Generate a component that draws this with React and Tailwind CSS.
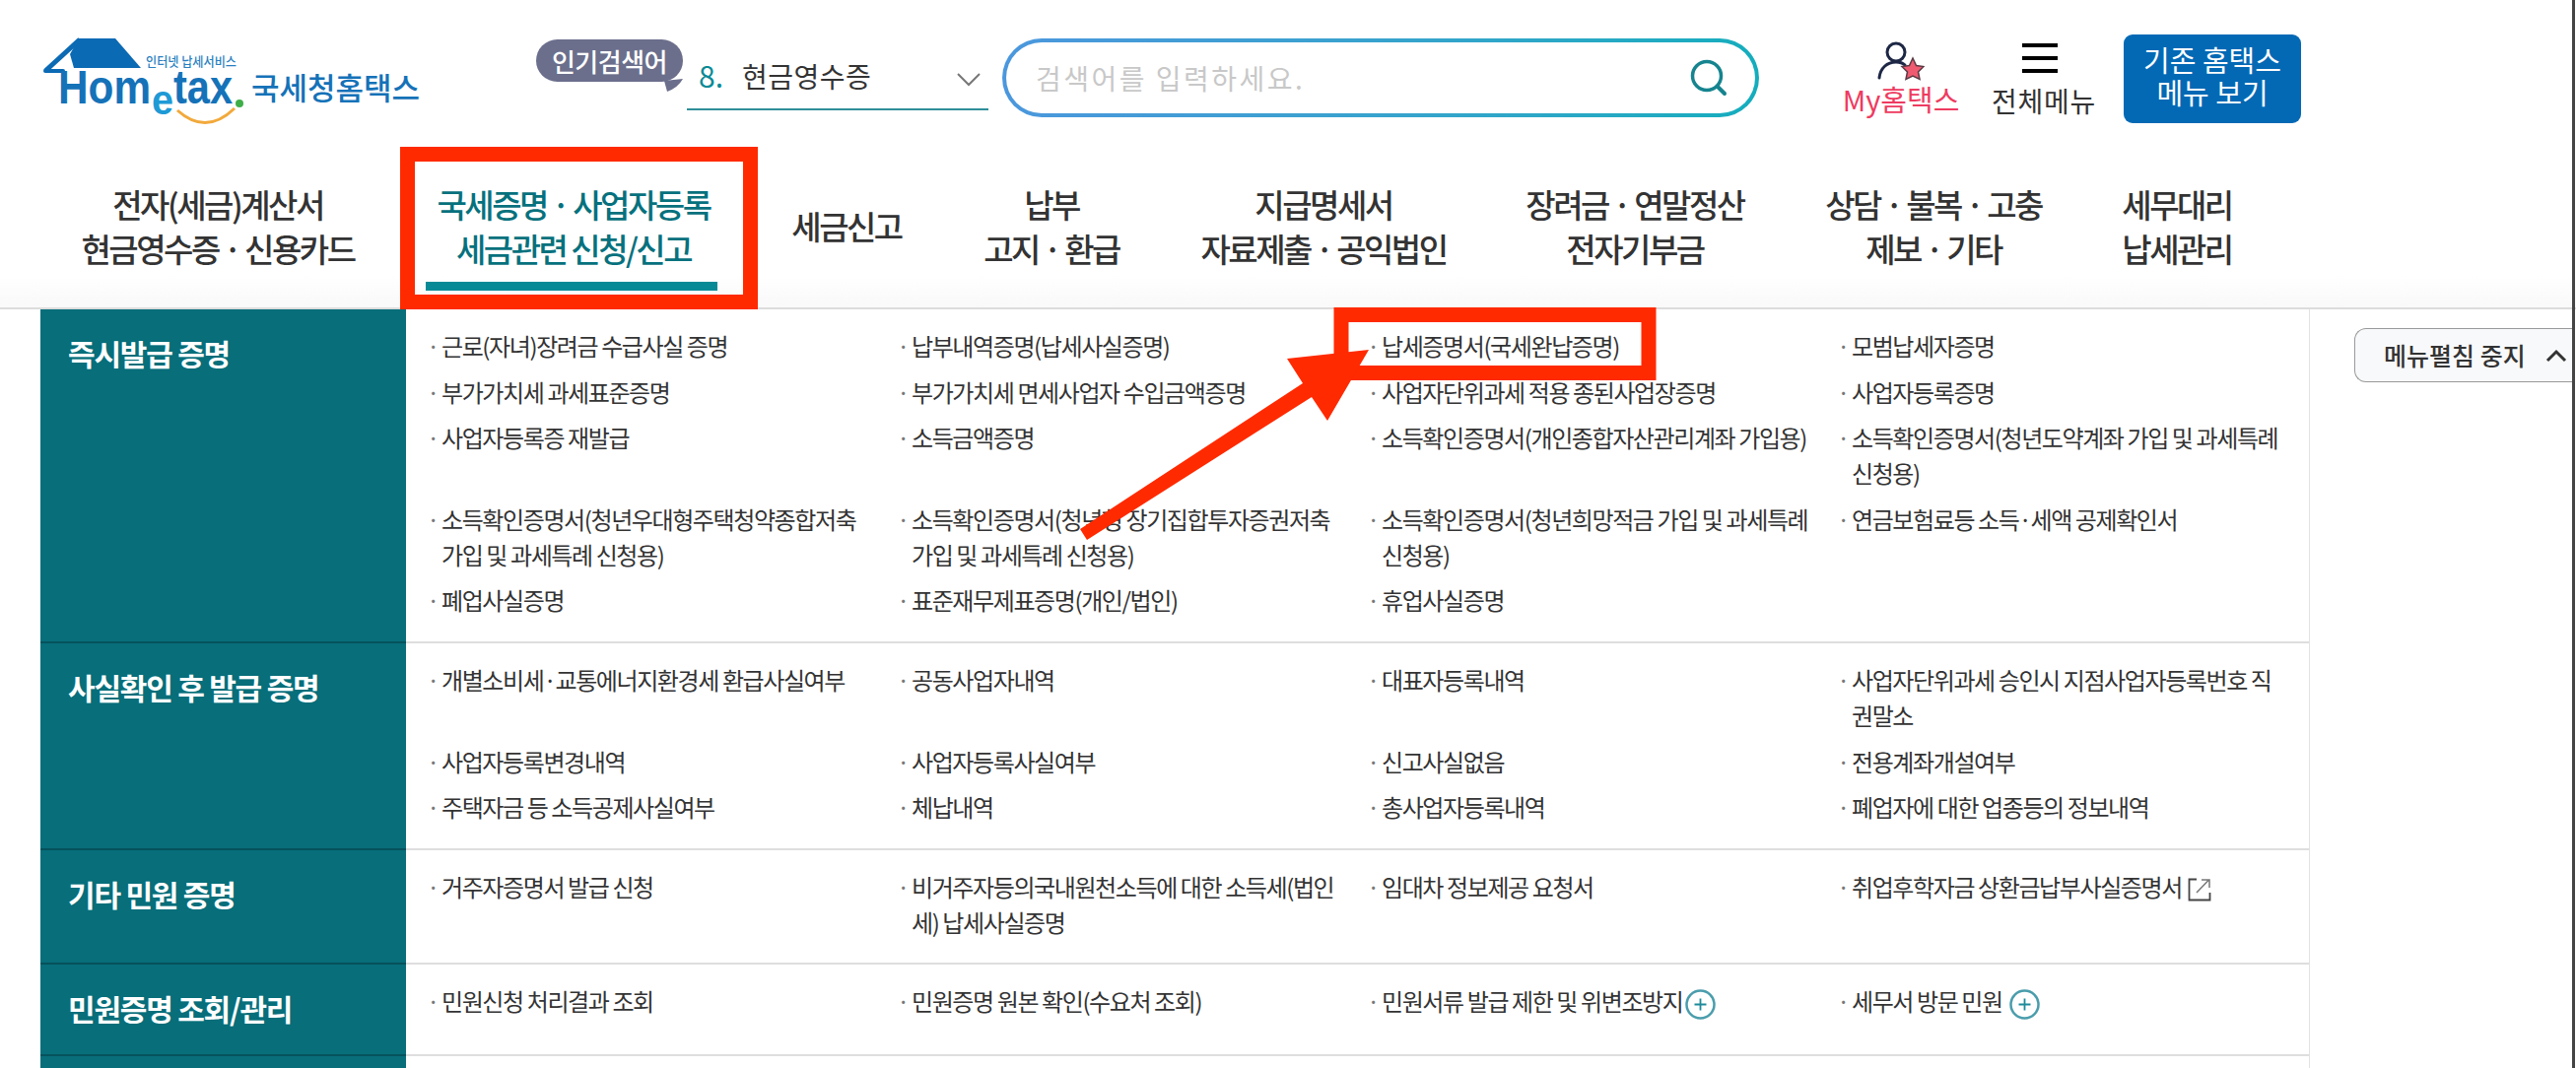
import React from "react";
const KR = '"Noto Sans CJK KR","Noto Sans KR",sans-serif';
const NAV = [
  ["w-[360px]", "전자(세금)계산서", "현금영수증 · 신용카드"],
  ["w-[362px]", "국세증명 · 사업자등록", "세금관련 신청/신고", true],
  ["w-[192px]", "세금신고"],
  ["w-[224px]", "납부", "고지 · 환급"],
  ["w-[328px]", "지급명세서", "자료제출 · 공익법인"],
  ["w-[304px]", "장려금 · 연말정산", "전자기부금"],
  ["w-[302px]", "상담 · 불복 · 고충", "제보 · 기타"],
  ["w-[192px]", "세무대리", "납세관리"],
];
const Plus = () => (
  <svg width="31" height="31" viewBox="0 0 31 31" className="inline-block ml-[3px] align-[-9px]">
    <circle cx="15.5" cy="15.5" r="14" fill="none" stroke="#4a9dac" strokeWidth="2.500" />
    <path d="M15.500 9.500v12M9.500 15.500h12" stroke="#1e8a9a" strokeWidth="1.800" />
  </svg>
);
const Ext = () => (
  <svg width="24" height="24" viewBox="0 0 24 24" className="inline-block ml-[6px] align-[-5px]">
    <path d="M9 1.500H1.500V22.500H22.500V15" fill="none" stroke="#444" strokeWidth="1.800" />
    <path d="M9 15L21 2.500M14 2H22V10" fill="none" stroke="#777" strokeWidth="1.500" />
  </svg>
);
const ROWS = [
  ["즉시발급 증명", "h-[339px]", [
    "근로(자녀)장려금 수급사실 증명", "납부내역증명(납세사실증명)", "납세증명서(국세완납증명)", "모범납세자증명",
    "부가가치세 과세표준증명", "부가가치세 면세사업자 수입금액증명", "사업자단위과세 적용 종된사업장증명", "사업자등록증명",
    "사업자등록증 재발급", "소득금액증명", "소득확인증명서(개인종합자산관리계좌 가입용)", "소득확인증명서(청년도약계좌 가입 및 과세특례 신청용)",
    "소득확인증명서(청년우대형주택청약종합저축 가입 및 과세특례 신청용)", "소득확인증명서(청년형 장기집합투자증권저축 가입 및 과세특례 신청용)", "소득확인증명서(청년희망적금 가입 및 과세특례 신청용)", "연금보험료등 소득·세액 공제확인서",
    "폐업사실증명", "표준재무제표증명(개인/법인)", "휴업사실증명",
  ]],
  ["사실확인 후 발급 증명", "h-[210px]", [
    "개별소비세·교통에너지환경세 환급사실여부", "공동사업자내역", "대표자등록내역", "사업자단위과세 승인시 지점사업자등록번호 직권말소",
    "사업자등록변경내역", "사업자등록사실여부", "신고사실없음", "전용계좌개설여부",
    "주택자금 등 소득공제사실여부", "체납내역", "총사업자등록내역", "폐업자에 대한 업종등의 정보내역",
  ]],
  ["기타 민원 증명", "h-[116px]", [
    "거주자증명서 발급 신청", "비거주자등의국내원천소득에 대한 소득세(법인세) 납세사실증명", "임대차 정보제공 요청서", ["취업후학자금 상환금납부사실증명서", <Ext key="e" />],
  ]],
  ["민원증명 조회/관리", "h-[93px]", [
    "민원신청 처리결과 조회", "민원증명 원본 확인(수요처 조회)", ["민원서류 발급 제한 및 위변조방지", <Plus key="p" />], ["세무서 방문 민원 ", <Plus key="p" />],
  ]],
  ["", "h-[14px]", []],
];
function Logo() {
  const L = "Liberation Sans,sans-serif";
  return (
    <svg width="390" height="92" viewBox="0 0 390 92" className="shrink-0">
      <path d="M39 4H76L102 34H34L30 20Z" fill="#0b6ab4" />
      <path d="M5 37L40 5" stroke="#0b6ab4" strokeWidth="5" fill="none" />
      <path d="M5 37H23" stroke="#0b6ab4" strokeWidth="4" fill="none" strokeLinecap="round" />
      <text x="18" y="70" fontFamily={L} fontWeight="700" fontSize="48" textLength="94" lengthAdjust="spacingAndGlyphs" fill="#1572b8">Hom</text>
      <text x="113" y="81" fontFamily={L} fontWeight="700" fontSize="42" textLength="22" lengthAdjust="spacingAndGlyphs" fill="#1e9ad6">e</text>
      <text x="135" y="70" fontFamily={L} fontWeight="700" fontSize="48" textLength="60" lengthAdjust="spacingAndGlyphs" fill="#1572b8">tax</text>
      <circle cx="202" cy="70" r="4" fill="#3fae49" />
      <path d="M139 77Q168 103 197 75" stroke="#f2a93b" strokeWidth="3" fill="none" />
      <text x="107" y="32" fontFamily={KR} fontSize="13" fontWeight="500" textLength="92" lengthAdjust="spacingAndGlyphs" fill="#2a7fc0">인터넷 납세서비스</text>
      <text x="214" y="66" fontFamily={KR} fontSize="31" fontWeight="500" fill="#1572b8">국세청홈택스</text>
    </svg>
  );
}
export default function App() {
  return (
    <div className="relative w-[2614px] h-[1084px] overflow-hidden bg-white text-[#333]" style={{ fontFamily: KR }}>
      <div className="flex h-[149px] items-start pl-[41px] pt-[35px]">
        <Logo />
        <div className="relative ml-[113px] mt-[5px] h-[53px] w-[149px] shrink-0">
          <div className="flex h-[43px] items-center justify-center rounded-[22px] bg-[#6b6f8c] text-[26px] font-medium tracking-[-0.500px] text-white">인기검색어</div>
          <svg width="20" height="14" viewBox="0 0 20 14" className="absolute left-[130px] top-[40px]"><path d="M0 2L3 13Q14 9 19 0Z" fill="#6b6f8c" /></svg>
        </div>
        <div className="ml-[4px] mt-[20px] flex h-[57px] w-[306px] shrink-0 items-center border-b-2 border-[#2f8f9a] pb-[12px] pl-[12px]">
          <span className="text-[30px] text-[#0a8a96]">8.</span>
          <span className="ml-[19px] text-[28px] tracking-[0.500px]">현금영수증</span>
          <svg width="24" height="14" viewBox="0 0 24 14" className="ml-[87px] mt-[8px]"><path d="M1 1L12 12L23 1" fill="none" stroke="#777" strokeWidth="2" /></svg>
        </div>
        <div className="ml-[14px] mt-[4px] h-[80px] w-[768px] shrink-0 rounded-[40px] bg-gradient-to-r from-[#4b97dd] to-[#13adbd] p-[4px]">
          <div className="flex h-full items-center justify-between rounded-[36px] bg-white pl-[30px] pr-[28px]">
            <span className="text-[28px] tracking-[2.500px] text-[#c8c8c8]">검색어를 입력하세요.</span>
            <svg width="38" height="38" viewBox="0 0 38 38"><circle cx="17" cy="17" r="14.500" fill="none" stroke="#15848f" strokeWidth="3.500" /><path d="M28 28L35 35" stroke="#15848f" strokeWidth="4" strokeLinecap="round" /></svg>
          </div>
        </div>
        <div className="ml-[85px] flex w-[118px] shrink-0 flex-col items-center whitespace-nowrap">
          <svg width="48" height="40" viewBox="0 0 48 40" className="mt-[7px]">
            <circle cx="19" cy="11" r="9" fill="none" stroke="#1d2745" strokeWidth="3" />
            <path d="M2 37C3 27 10 21 19 21C23 21 26 22 28 24" fill="none" stroke="#1d2745" strokeWidth="3" strokeLinecap="round" />
            <path d="M36 17L39.500 24.500L47 25.500L41.500 31L43 38.500L36 35L29 38.500L30.500 31L25 25.500L32.500 24.500Z" fill="#f05a70" stroke="#5b3a45" strokeWidth="1.500" />
          </svg>
          <span className="mt-[-1px] text-[29px] leading-[38px] text-[#ee3b60]">My홈택스</span>
        </div>
        <div className="ml-[33px] flex w-[106px] shrink-0 flex-col items-center whitespace-nowrap">
          <div className="mr-[8px] mt-[9px] flex h-[30px] w-[36px] flex-col justify-between">
            <span className="h-[4px] bg-black" /><span className="h-[4px] bg-black" /><span className="h-[4px] bg-black" />
          </div>
          <span className="mt-[9px] text-[28px] leading-[38px] tracking-[0.800px]">전체메뉴</span>
        </div>
        <div className="ml-[28px] flex h-[90px] w-[180px] shrink-0 items-center justify-center rounded-[9px] bg-[#0369b5] pb-[7px] text-center text-[29px] leading-[33px] text-white">기존 홈택스<br />메뉴 보기</div>
      </div>
      <nav className="flex h-[165px] border-b-2 border-[#dcdcdc] bg-gradient-to-b from-white from-80% to-[#f9f9f9] pb-[2px] pl-[41px]">
        {NAV.map(([w, a, b, on]) => (
          <div key={a} className={`${w} flex shrink-0 flex-col items-center justify-center whitespace-nowrap text-[33px] font-medium leading-[45px] tracking-[-2.500px] ${on ? "text-[#06717d]" : "text-[#333]"}`}>
            <span>{a}</span>{b && <span>{b}</span>}
          </div>
        ))}
      </nav>
      <div className="flex w-[2344px] flex-col border-r border-[#e2e2e2] pl-[41px]">
        {ROWS.map(([title, h, items], i) => (
          <div key={i} className={`${h} flex shrink-0 border-b-2 border-[#dedede]`}>
            <div className="-mb-[2px] w-[371px] shrink-0 border-b-2 border-[#05525c] bg-[#076e7a] pl-[28px] pt-[22px] text-[30px] font-bold leading-[44px] tracking-[-1.200px] text-white">{title}</div>
            <div className="grid flex-1 grid-cols-[477px_477px_477px_477px] content-start pl-[27px] pt-[19px] text-[24px] leading-[36px] tracking-[-1.400px] text-[#333]">
              {items.map((t, j) => (
                <div key={j} className="relative mb-[10.500px] pl-[9px] pr-[26px]">
                  <span className="absolute left-[-6px] top-0 text-[#777]">·</span>{t}
                </div>
              ))}
            </div>
          </div>
        ))}
      </div>
      <div className="absolute left-[2389px] top-[333px] flex h-[55px] w-[221px] items-center rounded-l-[12px] border border-r-0 border-[#999] bg-[#f8f9fa] pl-[29px] text-[25px] font-medium">
        메뉴펼침 중지
        <svg width="22" height="14" viewBox="0 0 22 14" className="ml-[20px]"><path d="M2 12L11 3L20 12" fill="none" stroke="#333" strokeWidth="3" /></svg>
      </div>
      <div className="absolute left-[2610px] top-0 h-full w-[3px] bg-[#444]" />
      <svg className="pointer-events-none absolute left-0 top-0" width="2614" height="1084" viewBox="0 0 2614 1084">
        <rect x="413.5" y="156.5" width="348" height="150" fill="none" stroke="#ff2a00" strokeWidth="15" />
        <rect x="1361" y="319.5" width="312" height="59" fill="none" stroke="#ff2a00" strokeWidth="15" />
      </svg>
      <div className="absolute left-[432px] top-[286px] h-[9px] w-[296px] bg-[#078a96]" />
      <svg className="pointer-events-none absolute left-0 top-0" width="2614" height="1084" viewBox="0 0 2614 1084">
        <path d="M1096 537L1322 389L1306 364L1389 355L1347 427L1331 403L1103 548Z" fill="#ff2a00" />
      </svg>
    </div>
  );
}
